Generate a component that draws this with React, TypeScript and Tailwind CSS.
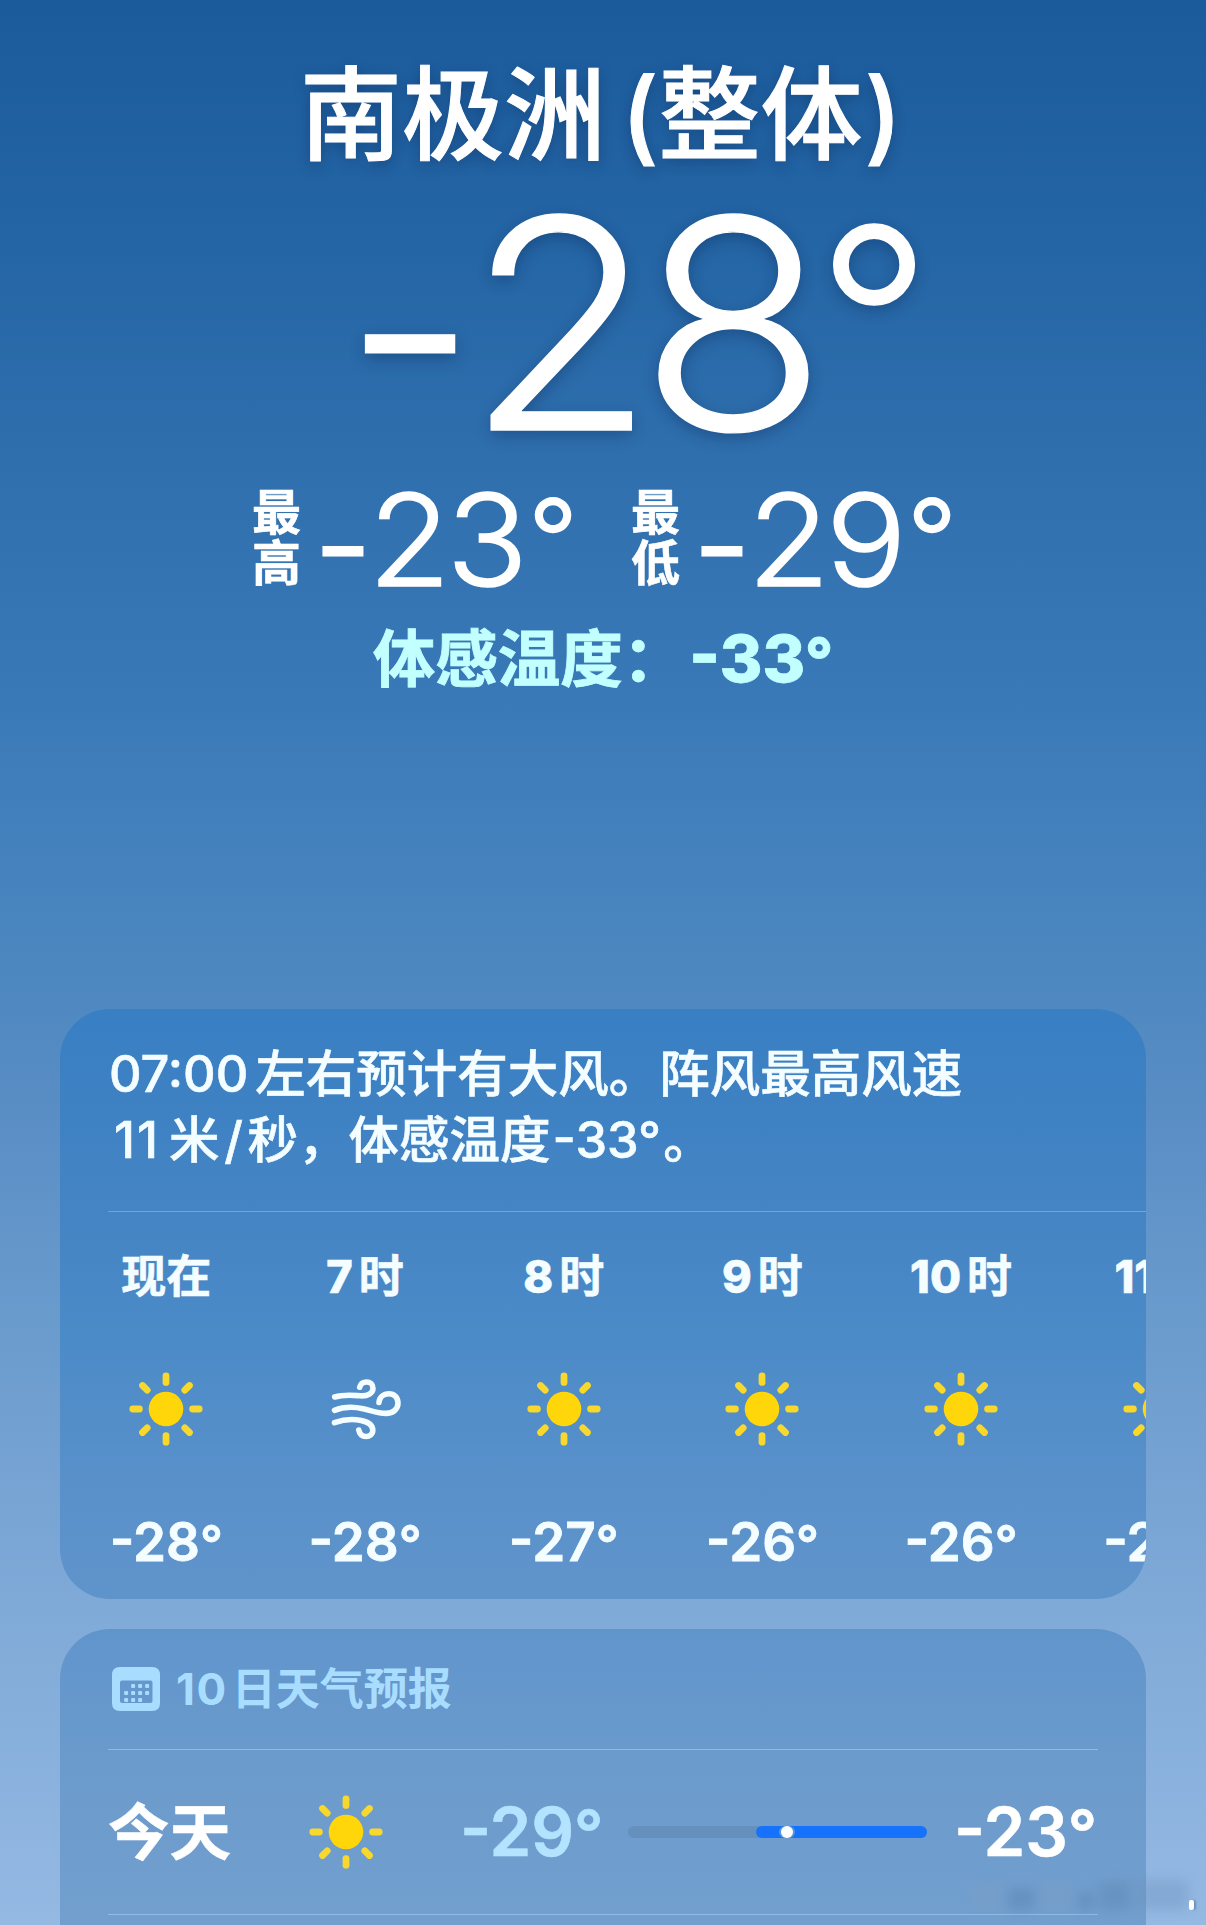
import React from 'react';

interface Hour {
  label: string;
  unit?: string;
  icon: 'sun' | 'wind';
  temp: string;
}

const HOURS: Hour[] = [
  { label: '现在', icon: 'sun', temp: '28' },
  { label: '7', unit: '时', icon: 'wind', temp: '28' },
  { label: '8', unit: '时', icon: 'sun', temp: '27' },
  { label: '9', unit: '时', icon: 'sun', temp: '26' },
  { label: '10', unit: '时', icon: 'sun', temp: '26' },
  { label: '11', unit: '时', icon: 'sun', temp: '26' },
];

const RAYS = [0, 45, 90, 135, 180, 225, 270, 315];

const CAL_DOTS = [
  [22, 20], [29, 20], [36, 20],
  [15, 27], [22, 27], [29, 27], [36, 27],
  [15, 34], [22, 34], [29, 34],
];

const SunIcon = () => (
  <svg width="76" height="76" viewBox="-38 -38 76 76" className="shrink-0">
    <circle r="17.3" fill="#ffd60a" />
    {RAYS.map(a => (
      <line key={a} x1="0" y1="-33.2" x2="0" y2="-26.6" stroke="#f8d82c" strokeWidth="6.8" strokeLinecap="round" transform={`rotate(${a})`} />
    ))}
  </svg>
);

const WindIcon = () => (
  <svg width="76" height="76" viewBox="-39 -38 76 76" fill="none" stroke="#f4fdff" strokeWidth="5.6" strokeLinecap="round" strokeLinejoin="round" className="shrink-0">
    <path d="M-31.300 -12C-22 -14.800 -14 -13.800 -6 -13.200C2 -12.600 7 -16 7 -20.800C7 -24.800 4 -27 .7 -27C-2.800 -27 -5.500 -25 -6.300 -21.800" />
    <path d="M-31.500 1.300C-24 -1.800 -13 -2.600 -3 -.3C6 1.800 12 4.400 20 4.400C27.500 4.400 32 -.3 32 -6C32 -11.800 28 -15.200 23 -15.200C17.500 -15.200 13.500 -11.800 13 -6.500" />
    <path d="M-31.500 13.700C-23 10.600 -13 9.800 -5 11.400C3 13 6.800 16.200 6.800 21.300C6.800 25.300 3.500 27.500 .2 27.500C-3.800 27.500 -6.500 25 -7.200 21" />
  </svg>
);

const CalendarIcon = () => (
  <svg width="48" height="44" viewBox="0 0 48 44" className="shrink-0">
    <path fillRule="evenodd" fill="#a9ddff" d="M8 0H40Q48 0 48 8V36Q48 44 40 44H8Q0 44 0 36V8Q0 0 8 0ZM10 13.500Q8 13.500 8 15.500V34Q8 36 10 36H38.500Q40.500 36 40.500 34V15.500Q40.500 13.500 38.500 13.500Z" />
    {CAL_DOTS.map(([x, y]) => (
      <rect key={`${x}-${y}`} x={x - 2.9} y={y - 3} width="4" height="4" rx="1" fill="#a9ddff" />
    ))}
  </svg>
);

const HighLow = ({ a, b, temp }: { a: string; b: string; temp: string }) => (
  <div className="w-[379px] flex items-center h-[110px]">
    <div className="w-[50px] mb-[4px] flex flex-col text-[49px] leading-[51px] font-bold [-webkit-text-stroke:0.6px_white]">
      <span>{a}</span>
      <span>{b}</span>
    </div>
    <div className="flex items-center text-[128px] leading-[110px] font-light whitespace-nowrap">
      <span className="ml-[16px] mt-[9px] w-[50px] flex justify-center font-normal">-</span>
      <span className="ml-[2px] w-[152px] flex justify-center tracking-[-4px] scale-x-105 [-webkit-text-stroke:1.6px_white]">{temp}</span>
      <span className="ml-[8px] mb-[4px] w-[46px] flex justify-center text-[111px] font-normal">°</span>
    </div>
  </div>
);

const HourColumn = ({ hour }: { hour: Hour }) => (
  <div className="w-[198.7px] shrink-0 flex flex-col items-center">
    <div className="h-[64px] flex items-center text-[45px] leading-[64px] font-bold whitespace-nowrap [-webkit-text-stroke:0.6px_#f4fdff]">
      {hour.unit ? (
        <>
          <span className="font-extrabold">{hour.label}</span>
          <span className="ml-[6px]">{hour.unit}</span>
        </>
      ) : (
        <span>{hour.label}</span>
      )}
    </div>
    <div className="mt-[62px]">{hour.icon === 'sun' ? <SunIcon /> : <WindIcon />}</div>
    <div className="mt-[63px] h-[64px] text-[53px] leading-[64px] font-semibold whitespace-nowrap [-webkit-text-stroke:0.8px_#f4fdff]">
      -{hour.temp}<span className="text-[50px]">°</span>
    </div>
  </div>
);

export default function App() {
  return (
    <div className="w-[1206px] h-[1925px] overflow-hidden relative flex flex-col items-center text-white font-['Inter','Noto_Sans_CJK_SC',sans-serif] bg-[linear-gradient(180deg,#1b5b9c_0px,#2465a5_240px,#2f6fae_460px,#3a79b8_700px,#4683be_880px,#5089c1_1009px,#5a8ec5_1120px,#6a9bcd_1320px,#7fa9d7_1600px,#94b9e3_1925px)]">
      {/* Current conditions */}
      <header className="h-[1009px] shrink-0 w-full flex flex-col items-center">
        <h1 className="mt-[45px] h-[140px] pr-[4px] flex items-center text-[102px] leading-[140px] font-medium whitespace-nowrap [-webkit-text-stroke:1px_white] [text-shadow:0_4px_14px_rgba(0,20,60,0.3)]">
          <span>南极洲</span>
          <span className="ml-[15px]">(</span>
          <span>整体</span>
          <span className="ml-[2px]">)</span>
        </h1>
        <div className="mt-[16px] h-[246px] self-start ml-[358px] flex items-center text-[293px] leading-[246px] font-light whitespace-nowrap [text-shadow:0_5px_16px_rgba(0,20,60,0.3)] [-webkit-text-stroke:1.4px_white]">
          <span className="w-[104px] mt-[10px] flex justify-center">-</span>
          <span className="ml-[9px] w-[336px] flex justify-center tracking-[-15px] scale-x-105">28</span>
          <span className="ml-[22px] mb-[10px] w-[90px] flex justify-center text-[254px]">°</span>
        </div>
        <div className="mt-[38px] self-start ml-[252px] flex">
          <HighLow a="最" b="高" temp="23" />
          <HighLow a="最" b="低" temp="29" />
        </div>
        <div className="mt-[19px] h-[90px] flex items-center text-[62.5px] leading-[90px] font-bold text-[#c2ffff] whitespace-nowrap [-webkit-text-stroke:0.8px_#c2ffff]">
          <span>体感温度：</span>
          <span className="ml-[4px] text-[65px] font-extrabold">-33<span className="text-[61px]">°</span></span>
        </div>
      </header>

      {/* Hourly forecast */}
      <section className="w-[1086px] h-[590px] shrink-0 rounded-[50px] overflow-hidden flex flex-col bg-[linear-gradient(180deg,#387fc3_0%,#4685c4_38%,#4b8bc8_56%,#5b91ca_84%,#5f94cb_100%)]">
        <div className="h-[202px] shrink-0 pt-[32px] pl-[49px] text-[50.5px] leading-[66px] font-medium text-[#f4fdff] whitespace-nowrap [-webkit-text-stroke:0.6px_#f4fdff]">
          <div className="flex">
            <span>07:00</span>
            <span className="ml-[7px]">左右预计有大风。阵风最高风速</span>
          </div>
          <div className="flex pl-[5px]">
            <span className="w-[55px] tracking-[2px]">11</span>
            <span>米</span>
            <span className="w-[28px] flex justify-center">/</span>
            <span>秒，体感温度</span>
            <span className="ml-[2px]">-33°</span>
            <span className="ml-[2px]">。</span>
          </div>
        </div>
        <div className="ml-[48px] h-px shrink-0 bg-white/25" />
        <div className="pt-[33px] pl-[7px] flex text-[#f4fdff]">
          {HOURS.map(h => <HourColumn key={h.label} hour={h} />)}
        </div>
      </section>

      {/* Daily forecast */}
      <section className="mt-[30px] w-[1086px] h-[330px] shrink-0 rounded-t-[50px] px-[48px] flex flex-col bg-[linear-gradient(180deg,#6095cc_0px,#6a9acc_120px,#729fce_296px)]">
        <div className="h-[120px] shrink-0 pl-[4px] flex items-center text-[44px] font-bold text-[#a9ddff] whitespace-nowrap">
          <CalendarIcon />
          <span className="ml-[16px] tracking-[1.5px]">10</span>
          <span className="ml-[4px]">日天气预报</span>
        </div>
        <div className="h-px shrink-0 bg-[#a9ddff]/50" />
        <div className="h-[164px] shrink-0 flex items-center whitespace-nowrap">
          <span className="mt-[3px] w-[200px] text-[61.5px] font-bold [-webkit-text-stroke:0.6px_white]">今天</span>
          <SunIcon />
          <span className="ml-[76px] w-[144px] text-[67px] font-semibold text-[#b3e3ff] [-webkit-text-stroke:0.6px_#b3e3ff]">-29<span className="text-[64px]">°</span></span>
          <div className="ml-[24px] w-[299px] h-[12px] rounded-full bg-[#6590be] flex justify-end">
            <div className="w-[171px] h-[12px] rounded-full bg-[#1672fa] flex items-center">
              <div className="ml-[23px] w-[16px] h-[12px] bg-[#5b96d8] rounded-full flex justify-center">
                <div className="w-[12px] h-[12px] rounded-full bg-white" />
              </div>
            </div>
          </div>
          <span className="ml-[27px] text-[67px] font-semibold [-webkit-text-stroke:0.6px_white]">-23<span className="text-[64px]">°</span></span>
        </div>
        <div className="h-px shrink-0 bg-[#a9ddff]/50" />
      </section>

      {/* Smudged mark over the bottom right corner */}
      <div className="absolute left-[972px] top-[1880px] w-[216px] h-[30px] blur-[6px] flex items-end gap-[6px] opacity-35">
        <div className="w-[30px] h-[26px] bg-[#7f9fc4]" />
        <div className="w-[26px] h-[22px] bg-[#4f7aa8]" />
        <div className="w-[32px] h-[24px] bg-[#7f9cc4]" />
        <div className="w-[16px] h-[18px] bg-[#4f7aa8]" />
        <div className="w-[30px] h-[28px] bg-[#557fab]" />
        <div className="w-[52px] h-[30px] bg-[#6b8fba]" />
      </div>
      <div className="absolute left-[1189px] top-[1900px] w-[5px] h-[10px] rounded-[2px] bg-white shadow-[2px_0_2px_#6f8fb0]" />
    </div>
  );
}
